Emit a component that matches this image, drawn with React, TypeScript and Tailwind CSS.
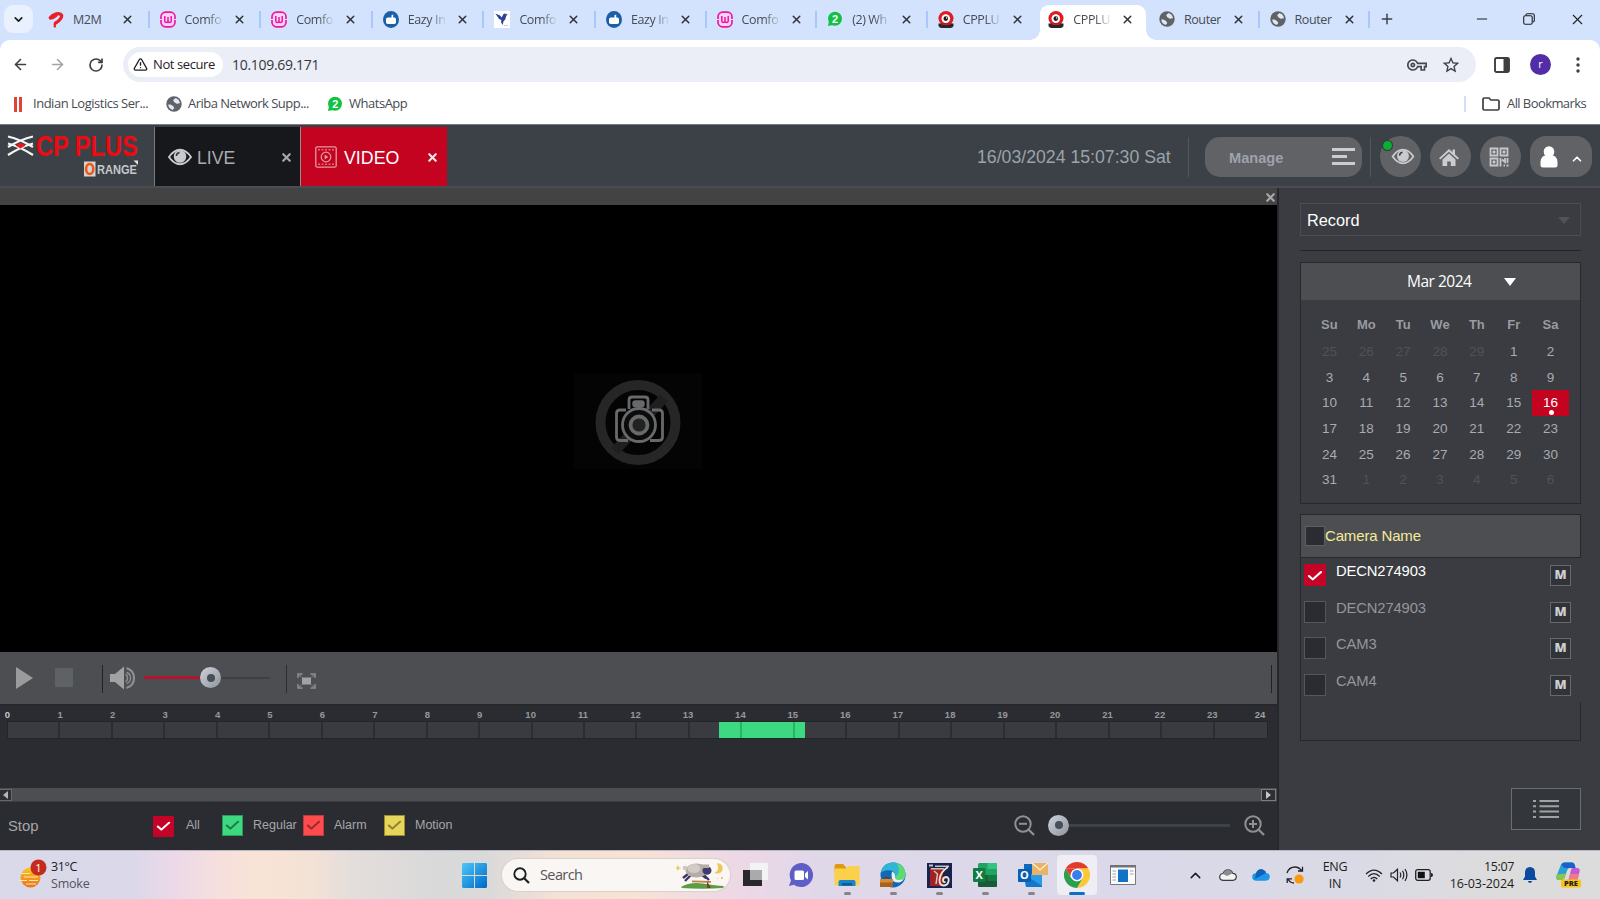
import React from "react";
import { ArrowLeft, ArrowRight, RotateCw, X, Plus, Minus, ChevronDown, ChevronUp, TriangleAlert, Check } from "lucide-react";
import { MdOutlineVpnKey, MdStarBorder } from "react-icons/md";

type IconKind = "airtel" | "comfo" | "eazy" | "bird" | "wa" | "cp" | "globe";

const TABS: { icon: IconKind; label: string; active?: boolean; noSep?: boolean }[] = [
  { icon: "airtel", label: "M2M" },
  { icon: "comfo", label: "Comfo" },
  { icon: "comfo", label: "Comfo" },
  { icon: "eazy", label: "Eazy In" },
  { icon: "bird", label: "Comfo" },
  { icon: "eazy", label: "Eazy In" },
  { icon: "comfo", label: "Comfo" },
  { icon: "wa", label: "(2) Wh" },
  { icon: "cp", label: "CPPLU", noSep: true },
  { icon: "cp", label: "CPPLU", active: true, noSep: true },
  { icon: "globe", label: "Router" },
  { icon: "globe", label: "Router" },
];

function Globe() {
  return (
    <svg viewBox="0 0 16 16" className="h-4 w-4 shrink-0">
      <circle cx="8" cy="8" r="7.7" fill="#5f6368" />
      <path d="M2.2 8.6c1.6-.4 3.600.2 4.600 1.300.8.9 1.500 1 1.400 2-.1.900-1.200.9-1.200 2C4.400 13.600 2.300 11.500 2.200 8.600z" fill="#dfe7f5" />
      <path d="M9.300 1.900c-.2 1.200-1.700 1-2 2.100-.3 1 .9 1.200.8 2.200 1.300.2 1.700 1.400 3 1.500 1.200.1 1.400-.8 2.900-.4C13.700 4.500 11.900 2.400 9.300 1.900z" fill="#dfe7f5" />
    </svg>
  );
}

function WhatsApp() {
  return (
    <svg viewBox="0 0 16 16" className="h-4 w-4 shrink-0">
      <circle cx="8" cy="7.800" r="7" fill="#12c143" />
      <path d="M1 15l1-5 4 4z" fill="#12c143" />
      <text x="8" y="12" fontSize="11" fontWeight="700" textAnchor="middle" fill="#fff" fontFamily="Liberation Sans">2</text>
    </svg>
  );
}

function Favicon({ kind }: { kind: IconKind }) {
  if (kind === "globe") return <Globe />;
  if (kind === "wa") return <WhatsApp />;
  const cls = "h-[17px] w-4 shrink-0";
  if (kind === "airtel")
    return (
      <svg viewBox="0 0 16 17" className={cls} fill="none" stroke="#e8202a" strokeLinecap="round">
        <path d="M2.300 6.800Q6 2.700 10.500 2.700Q15.200 3.200 12.800 7.300Q11 10 7.500 12.200" strokeWidth="3.300" />
        <path d="M7.500 12Q6 13.500 6.800 15.400" strokeWidth="2.400" />
        <path d="M2.300 7.200Q5 8 8.500 4.800" strokeWidth="2.200" />
      </svg>
    );
  if (kind === "comfo")
    return (
      <svg viewBox="0 0 16 17" className={cls} fill="none" stroke="#e91aa6">
        <rect x="1" y="1.200" width="14" height="14.600" rx="4.500" strokeWidth="1.700" fill="#ffd3f1" />
        <path d="M4.800 5v5q0 1.500 1.600 1.500T8 10V6v4q0 1.500 1.600 1.500t1.600-1.500V5" strokeWidth="1.500" />
        <path d="M0 8.500h2M14 8.500h2" stroke="#d3e3fd" strokeWidth="1.200" />
      </svg>
    );
  if (kind === "eazy")
    return (
      <svg viewBox="0 0 16 17" className={cls}>
        <ellipse cx="8" cy="8.500" rx="8" ry="8.500" fill="#1c5fa8" />
        <rect x="3" y="6.500" width="10" height="6.500" rx="1.800" fill="#fff" />
        <path d="M8.500 7V4.200l1.700-.7V7z" fill="#fff" />
      </svg>
    );
  if (kind === "bird")
    return (
      <svg viewBox="0 0 16 17" className={cls}>
        <path d="M0 0h16v17H0z" fill="#fff" />
        <path d="M1.300 2.500L6 4.500l1.700 2L9.500 3l2-.8-.2 1 2.500-.2-1.600 2-1 3.500-1.800 2-.7 3.500-1.600-2.500.2-2.500L4 7.500l1 .2z" fill="#2c4192" />
        <path d="M10 14.500h4" stroke="#c7ccdd" />
      </svg>
    );
  return (
    <svg viewBox="0 0 16 17" className={cls}>
      <ellipse cx="8" cy="7.300" rx="7.500" ry="7.300" fill="#e01b22" />
      <path d="M.5 12.500h15v2.500q-1 2-3 2h-9q-2 0-3-2z" fill="#26262b" />
      <path d="M1.500 12.500q6.500 3 13 0" fill="#e01b22" />
      <circle cx="7.800" cy="7.600" r="4.300" fill="#fff" />
      <circle cx="7.800" cy="7.600" r="2.300" fill="#1f1418" />
      <circle cx="8.600" cy="7" r=".8" fill="#fff" />
    </svg>
  );
}

function TabStrip() {
  return (
    <div className="flex h-10 shrink-0 bg-[#d3e3fd] pl-1 pt-px">
      <div className="mr-1 mt-1 flex h-7 w-[29px] items-center justify-center rounded-[9px] bg-[#eaf1fe]">
        <ChevronDown size={13} strokeWidth={3.2} color="#1f1f1f" />
      </div>
      {TABS.map((t, i) => (
        <div key={i} className={"relative flex h-[39px] shrink-0 " + (i < 5 ? "w-[111.600px]" : "w-[110.600px]")}>
          {t.active && (
            <span className="absolute bottom-0 left-[3px] right-[2px] top-[4px] rounded-t-[9px] bg-white">
              <span className="absolute -left-[10px] bottom-0 h-[10px] w-[10px] bg-[radial-gradient(circle_at_0_0,transparent_9.500px,#fff_10px)]" />
              <span className="absolute -right-[10px] bottom-0 h-[10px] w-[10px] bg-[radial-gradient(circle_at_100%_0,transparent_9.500px,#fff_10px)]" />
            </span>
          )}
          <div className="relative flex h-9 w-full items-center pl-[11px]">
            <Favicon kind={t.icon} />
            <span className={"ml-[9px] h-[19px] w-[37px] overflow-hidden whitespace-nowrap text-[12.500px] leading-[19px] tracking-[-0.4px] text-[#474b52] " + (t.label === "M2M" || t.label === "Router" ? "" : "[mask-image:linear-gradient(90deg,#000_60%,transparent_105%)]")}>
              {t.label}
            </span>
            <X size={13} strokeWidth={2.800} color="#33363b" className="ml-[11px] shrink-0" />
          </div>
          {!t.noSep && <span className="absolute right-[-1px] top-[10px] h-[17px] w-[2px] bg-[#a8c7fa]" />}
        </div>
      ))}
      <div className="flex h-9 grow items-center">
        <Plus size={16} strokeWidth={2.200} color="#3c4043" className="ml-[10px]" />
        <Minus size={16} strokeWidth={1.500} color="#1f1f1f" className="ml-[79px]" />
        <svg viewBox="0 0 12 12" className="ml-[33px] h-3 w-3" fill="none" stroke="#1f1f1f" strokeWidth="1.100">
          <rect x=".7" y="2.700" width="8.500" height="8.500" rx="1.500" />
          <path d="M3 2.500V2q0-1.300 1.400-1.300h5.200q1.700 0 1.700 1.700v5.200q0 1.400-1.700 1.400" />
        </svg>
        <X size={17} strokeWidth={1.500} color="#1f1f1f" className="ml-[34px]" />
      </div>
    </div>
  );
}

function Toolbar() {
  return (
    <div className="shrink-0 bg-[#d3e3fd]">
      <div className="flex h-12 items-center rounded-t-[10px] bg-white pl-3 pt-px">
        <ArrowLeft size={17} strokeWidth={2.300} color="#3c4043" />
        <ArrowRight size={17} strokeWidth={2.300} color="#a2a5a9" className="ml-[20px]" />
        <RotateCw size={16} strokeWidth={2.500} color="#3c4043" className="ml-[22px]" />
        <div className="ml-[19px] flex h-[35px] w-[1353px] items-center rounded-full bg-[#ebeef7] pl-[5px]">
          <div className="flex h-[25px] w-[95px] items-center rounded-full bg-white pl-[5px]">
            <TriangleAlert size={15} strokeWidth={2.200} color="#1f1f1f" />
            <span className="ml-[5px] whitespace-nowrap text-[13px] font-medium tracking-[-0.400px] text-[#1f2023]">Not secure</span>
          </div>
          <span className="ml-[9px] w-[90px] whitespace-nowrap text-[14px] tracking-[-0.300px] text-[#34373b]">10.109.69.171</span>
          <span className="grow" />
          <MdOutlineVpnKey size={20} color="#44474b" />
          <MdStarBorder size={20} color="#3c4043" className="ml-[14px] mr-[15px]" />
        </div>
        <svg viewBox="0 0 16 16" className="ml-[18px] h-4 w-4">
          <rect x="1" y="1" width="14" height="14" rx="1.500" fill="none" stroke="#3c4043" strokeWidth="1.900" />
          <path d="M9.500 1H15v14H9.500z" fill="#3c4043" />
        </svg>
        <div className="ml-[20px] flex h-[21px] w-[21px] items-center justify-center rounded-full bg-[#512da8] pb-px text-[11px] text-white">r</div>
        <svg viewBox="0 0 4 16" className="ml-[25px] h-4 w-1" fill="#3c4043">
          <circle cx="2" cy="2" r="1.700" /><circle cx="2" cy="8" r="1.700" /><circle cx="2" cy="14" r="1.700" />
        </svg>
      </div>
      <div className="flex h-9 items-center bg-white pb-[4px] pl-[14px] text-[13px] tracking-[-0.480px] text-[#474b52]">
        <span className="flex w-2 justify-between">
          <i className="h-[15px] w-[3px] bg-[#e04436]" /><i className="h-[15px] w-[3px] bg-[#e04436]" />
        </span>
        <span className="ml-[11px] w-[133px] whitespace-nowrap">Indian Logistics Ser...</span>
        <Globe />
        <span className="ml-[6px] w-[139px] whitespace-nowrap tracking-[-0.520px]">Ariba Network Supp...</span>
        <WhatsApp />
        <span className="ml-[6px] whitespace-nowrap">WhatsApp</span>
        <span className="grow" />
        <span className="h-4 w-[2px] bg-[#cfe0fc]" />
        <svg viewBox="0 0 18 14" className="ml-[16px] h-[14px] w-[18px]" fill="none" stroke="#3c4043" strokeWidth="1.700">
          <path d="M1 2.300Q1 1 2.300 1H7l1.800 2h6.900Q17 3 17 4.300v7.400q0 1.300-1.300 1.300H2.300Q1 13 1 11.700z" />
        </svg>
        <span className="ml-[7px] w-[93px] whitespace-nowrap tracking-[-0.580px]">All Bookmarks</span>
      </div>
    </div>
  );
}

function Eye({ className }: { className?: string }) {
  return (
    <svg viewBox="0 0 24 18" className={className}>
      <path d="M1 9Q6 1.800 12 1.800T23 9Q18 16.200 12 16.200T1 9z" fill="none" stroke="#c9cacc" strokeWidth="1.900" />
      <circle cx="12" cy="8.500" r="6.300" fill="#c9cacc" />
      <path d="M8.300 8q.3-3 3.200-3.500" stroke="#33373b" strokeWidth="1.500" fill="none" />
    </svg>
  );
}

function Logo() {
  return (
    <svg viewBox="0 0 154 60" className="h-[60px] w-[154px] shrink-0">
      <g fill="none" stroke="#f4f4f4" strokeWidth="2.300">
        <path d="M8 11.500Q20.500 14.500 33 22M8 22Q20.500 14.500 33 11.500" />
        <path d="M8 18.500Q20.500 22 33 30M8 30Q20.500 22 33 18.500" />
      </g>
      <path d="M15.500 20.500l5-3 5 3-5 3z" fill="#e21a1f" />
      <text transform="translate(36 30.500) scale(.812 1)" fontFamily="Liberation Sans" fontWeight="700" fontSize="29" fill="#ee0a12">CP PLUS</text>
      <rect x="84" y="36.500" width="11.500" height="15" fill="#d7d3d0" />
      <ellipse cx="89.700" cy="44" rx="3.600" ry="5" fill="none" stroke="#ea5a1c" strokeWidth="2.600" />
      <text transform="translate(97 49) scale(.85 1)" fontFamily="Liberation Sans" fontWeight="700" fontSize="13" fill="#c6c8ca">RANGE</text>
      <path d="M133.500 35.500h4.500v4.500z" fill="#e6e6e6" />
    </svg>
  );
}

function AppHeader() {
  return (
    <div className="flex h-[64px] shrink-0 border-b-2 border-t border-b-[#4b4d53] border-t-[#7a7e80] bg-[#3b4146] font-['Liberation_Sans',sans-serif]">
      <Logo />
      <div className="mt-[2px] flex h-[59px] w-[146px] items-center border-l border-[#777b7e] bg-[#17181b] pl-[13px]">
        <Eye className="h-[18px] w-[24px]" />
        <span className="ml-[5px] w-[40px] pt-[4px] text-[17.600px] text-[#a9acb0]">LIVE</span>
        <X size={13} strokeWidth={4} color="#a7a9ab" className="ml-[43px] mt-[2px]" />
      </div>
      <div className="mt-[2px] flex h-[59px] w-[147px] items-center border-l border-[#9a8a8c] bg-[#c40321] pl-[14px]">
        <svg viewBox="0 0 22 22" className="mt-px h-[22px] w-[22px]" fill="none" stroke="#e59a9f">
          <rect x=".8" y=".8" width="20.400" height="20.400" rx="1.500" strokeWidth="1.300" />
          <path d="M3 3.800h16M3 18.200h16" strokeWidth="1.400" strokeDasharray="2 1.500" opacity=".7" />
          <circle cx="11" cy="11" r="4.800" strokeWidth="1.200" />
          <path d="M9.600 8.600v4.800l3.700-2.400z" fill="#e59a9f" stroke="none" />
        </svg>
        <span className="ml-[7px] w-[57px] pt-[4px] text-[17.800px] text-white">VIDEO</span>
        <X size={13} strokeWidth={4} color="#f1e8e9" className="ml-[25px] mt-[2px]" />
      </div>
      <span className="grow" />
      <div className="flex h-[61px] items-center pt-[2px]">
        <span className="w-[211px] whitespace-nowrap pt-px text-[17.700px] text-[#9ba3ab]">16/03/2024 15:07:30 Sat</span>
        <span className="h-10 w-px bg-[#53575b]" />
        <div className="ml-[16px] flex h-10 w-[157px] items-center rounded-[15px] bg-[#606266] pl-[24px]">
          <span className="w-[103px] pt-[5px] text-[14.600px] font-bold text-[#9ea2ac]">Manage</span>
          <svg viewBox="0 0 24 17" className="h-[17px] w-6" fill="#cbccce"><path d="M0 0h23v3H0zM0 7h15v3H0zM0 14h23v3H0z" /></svg>
        </div>
        <span className="ml-[8px] h-10 w-px bg-[#53575b]" />
        <div className="relative ml-[9px] flex h-[41px] w-[41px] items-center justify-center rounded-full bg-[#606266]">
          <span className="absolute left-[3px] top-[5px] h-[9px] w-[9px] rounded-full bg-[#07b033] ring-1 ring-[#33373b]" />
          <Eye className="ml-[4px] h-[17px] w-6" />
        </div>
        <div className="ml-[9px] flex h-[41px] w-[41px] items-center justify-center rounded-full bg-[#606266]">
          <svg viewBox="0 0 20 18" className="mr-[4px] h-[18px] w-5" fill="#cbccce">
            <path d="M0 10.200L10 1l3.500 3.200V1.500H16v5l4 3.700-1.300 1.300L10 3.700 1.300 11.500z" />
            <path d="M3.500 11.500L10 5.600l6.500 5.900V18h-4.700v-4.500H8.200V18H3.500z" />
          </svg>
        </div>
        <div className="ml-[9px] flex h-[41px] w-[41px] items-center justify-center rounded-full bg-[#606266]">
          <svg viewBox="0 0 20 20" className="mr-[3px] h-5 w-5" fill="none" stroke="#c7c8ca" strokeWidth="1.800">
            <path d="M1.500 1.500h7v7h-7zM11.500 1.500h7v7h-7zM1.500 11.500h7v7h-7z" />
            <path d="M4 4h2v2H4zM14 4h2v2h-2zM4 14h2v2H4z" strokeWidth="1" fill="#c7c8ca" />
            <path d="M11.500 11v8.500M13 12.500l3 2.500V11M18.500 11v5M14.500 18.500h1.500M17.500 18.500h2" />
          </svg>
        </div>
        <div className="ml-[9px] mr-[8px] flex h-[41px] w-[62px] items-center rounded-[16px] bg-[#606266] pl-[10px]">
          <svg viewBox="0 0 18 22" className="h-[22px] w-[18px]" fill="#fff">
            <ellipse cx="9" cy="5.800" rx="5.300" ry="5.600" />
            <path d="M5 9.500Q.8 10.500.5 16v3q0 2.500 2.500 2.500h12q2.500 0 2.500-2.500v-3q-.3-5.500-4.500-6.500z" />
          </svg>
          <ChevronUp size={14} strokeWidth={3} color="#fff" className="ml-[12px] mt-[4px]" />
        </div>
      </div>
    </div>
  );
}

function NoVideo() {
  return (
    <svg viewBox="0 0 128 96" className="h-24 w-32">
      <path d="M0 0h128v96H0z" fill="#040404" />
      <circle cx="64" cy="49.500" r="37.500" fill="none" stroke="#262627" strokeWidth="10" />
      <path d="M41 78L90 25" stroke="#1f1f20" strokeWidth="10" />
      <g fill="none" stroke="#68696b" strokeWidth="2.800">
        <path d="M52 37H46q-3.500 0-3.500 3.500V64q0 3.500 3.500 3.500h8M78 37h7q3.500 0 3.500 3.500V64q0 3.500-3.500 3.500h-9" />
        <path d="M55 36V27q0-3 3-3h13q3 0 3 3v9" />
        <rect x="59.500" y="28.500" width="10" height="4.500" rx="1.800" strokeWidth="2.500" fill="#68696b" />
        <circle cx="65" cy="52" r="16.500" fill="#0b0b0b" />
        <circle cx="65" cy="52" r="8.500" strokeWidth="3.800" fill="#222" />
      </g>
    </svg>
  );
}

function Knob() {
  return (
    <span className="flex h-[21px] w-[21px] shrink-0 items-center justify-center rounded-full bg-[linear-gradient(135deg,#ced2dc,#8f939b)]">
      <span className="h-2 w-2 rounded-full bg-[#474e59]" />
    </span>
  );
}

function Magnifier({ plus }: { plus?: boolean }) {
  return (
    <svg viewBox="0 0 21 21" className="h-[21px] w-[21px] shrink-0" fill="none" stroke="#8e9092" strokeWidth="2">
      <circle cx="9" cy="9" r="7.700" />
      <path d="M14.500 14.500l5.500 5.500" strokeWidth="2.300" />
      <path d={plus ? "M5 9h8M9 5v8" : "M5 8.800h8"} />
    </svg>
  );
}

function Controls() {
  return (
    <div className="flex h-[52px] shrink-0 items-center bg-[#4c4e52] pb-px pl-4">
      <svg viewBox="0 0 17 22" className="h-[22px] w-[17px]" fill="#9a9b9d"><path d="M0 0l17 11L0 22z" /></svg>
      <span className="ml-[22px] h-[19px] w-[18px] bg-[#5f6264]" />
      <span className="ml-[29px] mt-[2px] h-7 w-px bg-[#1f2226]" />
      <svg viewBox="0 0 26 24" className="ml-[7px] h-6 w-[26px]" fill="none" stroke="#8d8f91">
        <path d="M0 8h5l9-7.500v23L5 16H0z" fill="#a0a2a4" stroke="none" />
        <path d="M15.500 8.500Q17.500 9 17.500 12t-2 3.500M16.500 6.500q4 1 4 5.500t-4 5.500" strokeWidth="1.400" />
        <path d="M16.500 2Q24 4.500 24 12t-7.500 10" strokeWidth="2.200" />
      </svg>
      <span className="ml-[8px] h-[3px] w-[56px] bg-[#b01630]" />
      <Knob />
      <span className="h-[2px] w-[49px] bg-[#3c4145]" />
      <span className="ml-[16px] mt-[2px] h-7 w-px bg-[#2b2e32]" />
      <svg viewBox="0 0 19 16" className="ml-[10px] mt-[7px] h-4 w-[19px]" fill="none" stroke="#8d8f91" strokeWidth="1.500">
        <path d="M1 5V1h4.500M13.500 1H18v4M18 11v4h-4.500M5.500 15H1v-4" />
        <path d="M2 2l2.500 2M17 2l-2.500 2M2 14l2.500-2M17 14l-2.500-2" strokeWidth="1" />
        <path d="M5 4.500h9v7H5z" fill="#a0a2a4" stroke="none" />
      </svg>
      <span className="grow" />
      <span className="mr-[5px] mt-[2px] h-7 w-px bg-[#1f2226]" />
    </div>
  );
}

function Timeline() {
  return (
    <div className="h-[84px] shrink-0 border-t-2 border-[#25272b]">
      <div className="flex h-[16px] overflow-hidden">
        {Array.from({ length: 25 }, (_, i) => (
          <span key={i} className={"shrink-0 pt-[2px] text-center text-[9.500px] font-bold leading-[13px] " + (i === 0 ? "w-[34px] pr-[19px] text-[#c5c6c8]" : i === 24 ? "w-[40px] text-[#a0a2a4]" : i < 10 ? "w-[52.450px] text-[#96989b]" : "w-[52.450px] pr-[3px] text-[#96989b]")}>
            {i}
          </span>
        ))}
      </div>
      <div className="relative ml-2 grid h-4 w-[1259px] grid-cols-24 bg-[#393b40] outline outline-[#232529]">
        <span className="absolute left-[711px] top-0 h-4 w-[86px] bg-[#3cd981]" />
        {Array.from({ length: 24 }, (_, i) => (
          <span key={i} className={"relative " + (i === 23 ? "" : i === 13 || i === 14 ? "border-r-2 border-[#2bb269]" : "border-r-2 border-[#2b2d31]")} />
        ))}
      </div>
    </div>
  );
}

const FILTERS = [
  { label: "All", box: "bg-[#c40326] mt-[2px]", check: "#ffffff", w: "w-[36px]", gap: "ml-[12px]" },
  { label: "Regular", box: "bg-[#3cd981] border border-[#2a9d5d]", check: "#1f7a47", w: "w-[50px]", gap: "ml-[10px]" },
  { label: "Alarm", box: "bg-[#fd4b4e] border border-[#c23a3e]", check: "#9b2a2d", w: "w-[50px]", gap: "ml-[10px]" },
  { label: "Motion", box: "bg-[#e8d65a] border border-[#9a8c33]", check: "#8d8233", w: "w-[50px]", gap: "ml-[10px]" },
];

function FilterBar() {
  return (
    <div className="flex h-[49px] shrink-0 items-center border-t border-[#3a3c40] pb-[2px] pl-2">
      <span className="w-[145px] pt-[3px] text-[14.800px] text-[#a5a7aa]">Stop</span>
      {FILTERS.map((f) => (
        <div key={f.label} className="flex items-center">
          <span className={"flex h-[21px] w-[21px] items-center justify-center " + f.box}>
            <Check size={17} strokeWidth={3} color={f.check} className="scale-y-90" />
          </span>
          <span className={"whitespace-nowrap pt-px text-[12.500px] text-[#a5a7aa] " + f.w + " " + f.gap}>{f.label}</span>
        </div>
      ))}
      <span className="grow" />
      <Magnifier />
      <span className="ml-[13px]"><Knob /></span>
      <span className="h-[3px] w-[161px] bg-[#3c4346]" />
      <span className="ml-[14px] mr-[12px]"><Magnifier plus /></span>
    </div>
  );
}

function Player() {
  return (
    <div className="flex w-[1277px] shrink-0 flex-col bg-[#2a2c31]">
      <div className="flex h-[17px] shrink-0 items-center justify-end bg-[#434343] pt-[1px]">
        <X size={13} strokeWidth={4} color="#a9a9a9" />
      </div>
      <div className="flex h-[447px] shrink-0 justify-center bg-black pr-[2px] pt-[168px]"><NoVideo /></div>
      <Controls />
      <Timeline />
      <div className="flex h-[13px] shrink-0 items-center justify-between bg-[#4c4e52] pr-[1px]">
        <span className="flex h-3 w-3 items-center justify-center border border-l-0 border-[#65686c] bg-[#2d2f33]">
          <svg viewBox="0 0 5 8" className="h-2 w-[5px]" fill="#b4b6b8"><path d="M5 0v8L0 4z" /></svg>
        </span>
        <span className="flex h-3 w-[15px] items-center justify-center border border-[#7a7d81] bg-[#2d2f33]">
          <svg viewBox="0 0 5 8" className="h-2 w-[5px]" fill="#c4c6c8"><path d="M0 0v8l5-4z" /></svg>
        </span>
      </div>
      <FilterBar />
    </div>
  );
}

const DAYS = [25, 26, 27, 28, 29, ...Array.from({ length: 31 }, (_, i) => i + 1), 1, 2, 3, 4, 5, 6];

function Calendar() {
  return (
    <div className="mt-[11px] h-[242px] w-[281px] shrink-0 border border-[#26282c]">
      <div className="flex h-[37px] items-center bg-[#4c4e52]">
        <span className="ml-[106px] w-[97px] font-['Open_Sans',sans-serif] text-[15.500px] tracking-[-0.500px] text-white">Mar 2024</span>
        <svg viewBox="0 0 12 8" className="h-2 w-3" fill="#fff"><path d="M0 0h12L6 8z" /></svg>
      </div>
      <div className="ml-[10px] mt-[12px] grid w-[258px] grid-cols-7 text-center">
        {["Su", "Mo", "Tu", "We", "Th", "Fr", "Sa"].map((d) => (
          <span key={d} className="h-[27px] text-[13px] font-bold leading-[26px] text-[#999ba0]">{d}</span>
        ))}
        {DAYS.map((d, i) => {
          const out = i < 5 || i > 35;
          const today = d === 16;
          return (
            <span key={i} className={"relative h-[25.670px] text-[13.500px] leading-[25.400px] " + (today ? "bg-[#c40321] text-white" : out ? "text-[#505257]" : "text-[#a9abb0]")}>
              {d}
              {today && <span className="absolute bottom-[1px] left-[17px] h-[5px] w-[5px] rounded-full bg-white" />}
            </span>
          );
        })}
      </div>
    </div>
  );
}

const CAMERAS = [
  { name: "DECN274903", on: true },
  { name: "DECN274903", on: false },
  { name: "CAM3", on: false },
  { name: "CAM4", on: false },
];

function Sidebar() {
  return (
    <div className="flex grow flex-col border-l-2 border-[#25272b] bg-[#3a3c41] pl-[21px]">
      <div className="mt-[15px] flex h-[33px] w-[281px] shrink-0 items-center border border-[#4b4d52] pl-[6px] pr-[10px] text-[16.300px] text-white">
        <span className="grow pt-[2px]">Record</span>
        <svg viewBox="0 0 12 7" className="mt-[2px] h-[7px] w-3" fill="#505256"><path d="M0 0h12L6 7z" /></svg>
      </div>
      <div className="mt-[14px] h-px w-[281px] shrink-0 bg-[#232529]" />
      <Calendar />
      <div className="mt-[10px] h-[227px] w-[281px] shrink-0 border border-[#26282c]">
        <div className="flex h-[43px] items-center border-b border-[#26282c] bg-[#4c4e52] pl-[4px]">
          <span className="h-5 w-5 border border-[#5d5f63] bg-[#2a2c31]" />
          <span className="text-[15px] tracking-[-0.150px] text-[#f5ea9a]">Camera Name</span>
        </div>
        <div className="relative -mr-px h-[144px] bg-[#3a3c41] pt-[6px]">
          {CAMERAS.map((c, i) => (
            <div key={i} className="flex h-[36.600px] items-start pl-[3px]">
              <span className={"flex h-[22px] w-[22px] items-center justify-center " + (c.on ? "bg-[#c40326]" : "border border-[#54565a] bg-[#2a2c31]")}>
                {c.on && <Check size={18} strokeWidth={3} color="#fff" className="mt-px scale-y-90" />}
              </span>
              <span className={"ml-[10px] w-[214px] text-[14.800px] leading-[15px] tracking-[-0.150px] " + (c.on ? "text-white" : "text-[#94969b]")}>{c.name}</span>
              <span className="mt-px flex h-[21px] w-[21px] items-center justify-center border border-[#66686c] bg-[#303338] font-['Open_Sans',sans-serif] text-[12.500px] font-extrabold text-[#cdced0]">M</span>
            </div>
          ))}
        </div>
      </div>
      <div className="mr-[19px] mt-[47px] flex h-[42px] w-[70px] shrink-0 items-center justify-center self-end border border-[#6a6d71] bg-[#33373b]">
        <svg viewBox="0 0 26 18" className="h-[18px] w-[26px]" stroke="#a0a2a4" strokeWidth="2">
          <path d="M0 1h3M0 6.300h3M0 11.600h3M0 17h3M6.500 1H26M6.500 6.300H26M6.500 11.600H26M6.500 17H26" />
        </svg>
      </div>
    </div>
  );
}

function Sheep() {
  return (
    <svg viewBox="0 0 50 27" className="h-[27px] w-[50px]">
      <path d="M5 25Q14 19.500 27 21.500t21 2.500l-1 2q-21 1.500-41 0z" fill="#5d9b45" />
      <path d="M16 18.500l19 .5v1.800l-19-.5z" fill="#b98246" />
      <path d="M31 19l4 7h-4z" fill="#7b4522" />
      <path d="M12 12l-5 4M15 13l-6 6M28 13l5 5M26 13l4 3" stroke="#3a3564" strokeWidth="2.300" />
      <ellipse cx="20.500" cy="8.500" rx="11" ry="7" fill="#b5aca6" />
      <ellipse cx="18" cy="6.500" rx="6.500" ry="4.500" fill="#d2cac4" />
      <ellipse cx="9" cy="6" rx="2.300" ry="2.300" fill="#cfc7c0" />
      <ellipse cx="31" cy="8.500" rx="4.500" ry="4.300" fill="#413b6c" />
      <path d="M26 2.500h7v3.500h-7z" fill="#b5aba8" />
      <path d="M41 1q7 1 5.500 7-2 5-8.500 3 6-2 3-10z" fill="#eec75c" />
      <path d="M2 3l1 2.500L5.500 6 3 7 2 9 1 7-1 6l2-1zM45 15h2v2h-2zM41 16h1v1h-1z" fill="#efc66a" />
    </svg>
  );
}

function AppIcon({ children, dot, active }: { children: React.ReactNode; dot?: boolean; active?: boolean }) {
  return (
    <div className={"relative flex h-10 w-10 shrink-0 items-center justify-center " + (active ? "rounded-[4px] bg-[#efeef5]" : "")}>
      {children}
      {dot && <span className="absolute bottom-0 h-[3px] w-[7px] rounded-full bg-[#85838c]" />}
      {active && <span className="absolute bottom-0 h-[3px] w-4 rounded-full bg-[#0f6fc4]" />}
    </div>
  );
}

function Taskbar() {
  return (
    <div className="flex h-[49px] shrink-0 items-center border-t border-[#b9b8c4] bg-[linear-gradient(90deg,#d9d9ea_0px,#dad8e9_130px,#ecd9e8_175px,#f6dfdc_220px,#f8e4d6_260px,#f4e2d6_310px,#e4dedb_350px,#d9d9da_440px,#dbdada_490px,#f4e2d4_560px,#f7e3d3_640px,#f1dce0_690px,#ecd8e6_745px,#dfd8e9_820px,#dad9e9_1150px,#dadae6_1350px,#dcdcdd_1500px)] font-['Open_Sans',sans-serif] text-[#1d1d22]">
      <div className="flex w-[454px] items-center pl-[18px]">
        <svg viewBox="0 0 30 30" className="-mt-[3px] h-[30px] w-[30px]">
          <defs><linearGradient id="sun" x1="0" y1="0" x2="0" y2="1"><stop offset="0" stopColor="#fbc724" /><stop offset="1" stopColor="#e8701c" /></linearGradient></defs>
          <circle cx="12.500" cy="18.500" r="10" fill="url(#sun)" />
          <path d="M3 14.500h9M6 18h14M1 21.500h8M11 21.500h9M8 25h10" stroke="#ffe6b0" strokeWidth="1.200" />
          <circle cx="20.500" cy="8.500" r="8" fill="#c42b1c" />
          <text x="20.500" y="12.500" fontSize="11" textAnchor="middle" fill="#fff" fontFamily="Open Sans">1</text>
        </svg>
        <div className="-mt-px ml-[3px] text-[12.500px] leading-[17px] tracking-[-0.400px]">
          <div>31°C</div><div className="tracking-[-0.200px] text-[#54535c]">Smoke</div>
        </div>
      </div>
      <div className="flex w-[48px] pl-[8px]">
        <svg viewBox="0 0 25 25" className="h-[25px] w-[25px]">
          <defs><linearGradient id="win" x1="0" y1="0" x2="1" y2="1"><stop offset="0" stopColor="#4cc9f8" /><stop offset="1" stopColor="#0067c8" /></linearGradient></defs>
          <path d="M1 0h11v12H0V1zM13 0h11l1 1v11H13zM0 13h12v12H1l-1-1zM13 13h12v11l-1 1H13z" fill="url(#win)" />
        </svg>
      </div>
      <div className="flex h-8 w-[228px] items-center rounded-full bg-[#faf6f3] pl-[11px] shadow-[0_0_1px_1px_#d9d0cc]">
        <svg viewBox="0 0 17 17" className="h-[17px] w-[17px]" fill="none" stroke="#1f1f22" strokeWidth="1.900"><circle cx="7" cy="7" r="5.700" /><path d="M11 11l5 5" strokeWidth="2.200" /></svg>
        <span className="ml-[10px] w-[136px] text-[14.500px] tracking-[-0.600px] text-[#56545a]">Search</span>
        <Sheep />
      </div>
      <div className="ml-[5px] flex gap-[6px]">
        <AppIcon>
          <svg viewBox="0 0 26 24" className="h-6 w-[26px]"><path d="M1 7h19v16H1z" fill="#29292b" /><path d="M8 0h18v17H8z" fill="#f3f3f5" /><path d="M8 7h12v10H8z" fill="#aaaaae" /></svg>
        </AppIcon>
        <AppIcon>
          <svg viewBox="0 0 24 24" className="h-6 w-6"><path d="M12 0a12 12 0 1 1-7 21.700L0 23l2-5.500A12 12 0 0 1 12 0z" fill="#5f5dc6" /><rect x="5.500" y="7.500" width="9.500" height="9.500" rx="1.500" fill="#fff" /><path d="M16 10.500l3-2.500v8.500L16 14z" fill="#fff" /></svg>
        </AppIcon>
        <AppIcon dot>
          <svg viewBox="0 0 26 24" className="h-6 w-[26px]"><path d="M.5 3Q.5 1 2.500 1H9l3 3v6H.5z" fill="#dd9b12" /><path d="M.5 5.500H12L14 3h11.500v19.500H.5z" fill="#fcd04a" /><path d="M4.500 23v-4q0-2 2-2h13q2 0 2 2v4z" fill="#1784cc" /><path d="M8 20h10v2.500H8z" fill="#0f5c96" /></svg>
        </AppIcon>
        <AppIcon dot>
          <svg viewBox="0 0 26 26" className="h-[26px] w-[26px]">
            <circle cx="13" cy="13" r="12.500" fill="#1267b8" />
            <path d="M.7 11Q2.500.5 13 .5q11.500.5 12.500 11.500 0 6-6.500 6-5 0-4-3 1.500-5-4-6.500Q4 7.500.7 11z" fill="#2fb6d4" />
            <path d="M17 1.200q8 2.800 8.500 10.800 0 6-6.500 6-5 0-4-3Q22 11 17 1.200z" fill="#5ddb6c" />
            <path d="M12 9.500q4 1.500 3 5.500 0 3 4 3 3.500 0 5.500-2-1.500 3.500-5 4.500-6 .5-7.500-3.500-1-4 0-7.500z" fill="#e6edf6" />
            <path d="M0 17h13v8H0z" fill="#a8601c" /><path d="M0 17h13v3.500H0z" fill="#d58c2e" /><path d="M4.500 17v-1.500h4V17" stroke="#6d3b10" fill="none" />
          </svg>
        </AppIcon>
        <AppIcon dot>
          <svg viewBox="0 0 25 25" className="h-[25px] w-[25px]"><path d="M0 0h25v25H0z" fill="#18234f" /><path d="M3 5h13v18H3z" fill="#a32024" /><path d="M2 1.500h4v2H2zM8 2.500h14v1.500H8zM4 5h13v1.500H4z" fill="#c9c4bb" /><path d="M21 4Q13 9 12.500 17q0 5.500 4 5.500t5-4-2.500-4.500q-3 .5-3 3t2.500 2" stroke="#ece5d2" strokeWidth="1.900" fill="none" /><path d="M7 8l3.500 3L9 21" stroke="#d9c9b8" strokeWidth="1.500" fill="none" /></svg>
        </AppIcon>
        <AppIcon dot>
          <svg viewBox="0 0 24 24" className="h-6 w-6"><rect x="5" width="19" height="24" rx="1.500" fill="#21a366" /><path d="M5 12h19v10.500q0 1.500-1.500 1.500h-16Q5 24 5 22.500z" fill="#185c37" /><path d="M14.500 0H24v6h-9.500z" fill="#33c481" /><path d="M14.500 12H24v6h-9.500z" fill="#107c41" /><rect y="5" width="12.500" height="14" rx="1.200" fill="#107c41" /><text x="6.200" y="16" fontSize="11" fontWeight="700" textAnchor="middle" fill="#fff" fontFamily="Open Sans">X</text></svg>
        </AppIcon>
        <AppIcon dot>
          <svg viewBox="0 0 30 26" className="ml-[4px] h-[26px] w-[30px]"><path d="M6 2h14v10H6z" fill="#0f6cbd" /><path d="M6 12h18v13H8z" fill="#2a9be8" /><path d="M6 12l18 12v1H8z" fill="#1577c9" /><rect y="7" width="13" height="13" rx="1" fill="#0a5eb0" /><text x="6.500" y="17.200" fontSize="11" fontWeight="700" textAnchor="middle" fill="#fff" fontFamily="Open Sans">O</text><path d="M14 1h16v12H14z" fill="#e9b269" /><path d="M14 1l8 7 8-7" stroke="#fff1d9" strokeWidth="1.200" fill="none" /></svg>
        </AppIcon>
        <AppIcon active>
          <svg viewBox="0 0 26 26" className="h-[26px] w-[26px]">
            <path d="M1.740 6.500A13 13 0 0 1 24.260 6.500H13z" fill="#e23b2e" />
            <path d="M24.260 6.500A13 13 0 0 1 13 26l5.600-9.700L13 6.500z" fill="#fcc934" />
            <path d="M13 26A13 13 0 0 1 1.740 6.500l5.630 9.700L13 19.500l5.600-3.200z" fill="#2aa04c" />
            <path d="M1.740 6.500H13v7H5.800z" fill="#e23b2e" />
            <circle cx="13" cy="13" r="6.300" fill="#fff" /><circle cx="13" cy="13" r="4.900" fill="#3b7ded" />
          </svg>
        </AppIcon>
        <AppIcon>
          <svg viewBox="0 0 26 20" className="h-5 w-[26px]"><path d="M.5.500h25v19H.5z" fill="#fbfbfb" stroke="#77777c" /><path d="M0 0h26v2.500H0z" fill="#717176" /><path d="M8 4.500h10V17H8z" fill="#1272c8" /><path d="M2.500 6h3.500M2.500 9h3.500M2.500 12h3.500M2.500 15h3.500M20 6h3.500M20 9h3.500" stroke="#a0a0a6" /></svg>
        </AppIcon>
      </div>
      <span className="grow" />
      <ChevronUp size={17} strokeWidth={2} color="#1c1c20" />
      <svg viewBox="0 0 18 12" className="ml-[15px] h-3 w-[18px]"><path d="M4.500 11.300Q.7 11.300.7 8t3.500-3.500Q5.500.8 9 .8t4.800 3.500q3.500.2 3.500 3.500t-3.500 3.500z" fill="#f3f3f3" stroke="#3b3b3f" strokeWidth="1.200" /><path d="M4 5Q6 .8 9 .8t4.800 3.500L8 7z" fill="#8b8b90" /></svg>
      <svg viewBox="0 0 18 12" className="ml-[15px] h-3 w-[18px]"><path d="M4.500 11.800Q.2 11.800.2 8T4 4.300Q5.500.3 9 .3t5 3.700q3.800.2 3.800 3.800t-3.800 4z" fill="#1f97e6" /><path d="M4 4.300Q5.500.3 9 .3t5 3.700L3 10z" fill="#0d62b8" /></svg>
      <svg viewBox="0 0 18 18" className="ml-[16px] h-[18px] w-[18px]" fill="none" stroke="#222226" strokeWidth="1.300"><path d="M1 7q2-6 8-6 4 0 7 4M16.500.8V5H12M1.200 17v-4.200H6M2 13q2 4 6 4" /><circle cx="13" cy="13" r="4.600" fill="#f99a0c" stroke="none" /></svg>
      <div className="-mt-px ml-[16px] w-[30px] text-center text-[12.500px] leading-[17px] tracking-[-0.300px]"><div>ENG</div><div>IN</div></div>
      <svg viewBox="0 0 18 13" className="ml-[15px] h-[13px] w-[18px]" fill="none" stroke="#222226" strokeWidth="1.200"><path d="M1 5q8-8 16 0M3.300 7.500q5.700-5.800 11.400 0M5.700 10q3.300-3.400 6.600 0" /><circle cx="9" cy="11.500" r="1.300" fill="#222226" stroke="none" /></svg>
      <svg viewBox="0 0 18 14" className="ml-[7px] h-[14px] w-[18px]" fill="none" stroke="#222226" strokeWidth="1.200"><path d="M1 5h2.500L7.500 1.200v11.600L3.500 9H1zM10 4.500q1.600 2.500 0 5M12.500 2.700q2.600 4.300 0 8.600M15 1q3.800 6 0 12" /></svg>
      <svg viewBox="0 0 18 12" className="ml-[7px] h-3 w-[18px]"><rect x=".7" y=".7" width="14.500" height="10.600" rx="2" fill="none" stroke="#222226" strokeWidth="1.300" /><path d="M2.800 2.800h7v6.400h-7z" fill="#111" /><path d="M16 4q2 0 2 2t-2 2z" fill="#222226" /></svg>
      <div className="-mt-px ml-[7px] w-[74px] text-right text-[12.500px] leading-[17px] tracking-[-0.100px]"><div className="tracking-[-0.350px]">15:07</div><div>16-03-2024</div></div>
      <svg viewBox="0 0 14 16" className="ml-[9px] h-4 w-[14px]" fill="#0b4a9e"><path d="M7 0q5 .3 5 5.500v4L14 13H0l2-3.500v-4Q2 .3 7 0zM4.800 14h4.400Q8.500 16 7 16t-2.200-2z" /></svg>
      <svg viewBox="0 0 26 26" className="ml-[18px] mr-[19px] h-[26px] w-[26px]">
        <path d="M6 2.500Q7 .5 9.500.5H17q2 0 2.700 2.200L20.500 6H15q-2 0-2.700 2l-2.800 8q-.7 2-2.500 2H4q-3.500 0-2.500-4z" fill="#2b9fd8" />
        <path d="M6.500 2.500Q7.500.5 9.500.5H17q2 0 2.700 2.200L20.500 6H11Q8 6 6.500 2.500z" fill="#1b5fc8" />
        <path d="M1.700 12.500L11 11.500l-1.500 4.500q-.7 2-2.500 2H4q-3 0-2.500-4z" fill="#8cc54a" />
        <path d="M17.500 6H22q3.500 0 2.500 4l-2 8h-9l2.500-10q.5-2 1.500-2z" fill="#c65ad0" />
        <path d="M15 12h9l-1.500 6h-9z" fill="#ee7d8a" />
        <rect x="6" y="17.500" width="20" height="8" rx="1.500" fill="#fbc313" /><text x="16" y="24.200" fontSize="7.500" fontWeight="800" textAnchor="middle" fill="#222" fontFamily="Open Sans">PRE</text>
      </svg>
    </div>
  );
}

export default function App() {
  return (
    <div className="flex h-[899px] w-[1600px] flex-col overflow-hidden bg-[#2a2c31] font-['Open_Sans','Noto_Sans',sans-serif]">
      <TabStrip />
      <Toolbar />
      <AppHeader />
      <div className="flex h-[662px] shrink-0 font-['Liberation_Sans',sans-serif]">
        <Player />
        <Sidebar />
      </div>
      <Taskbar />
    </div>
  );
}
